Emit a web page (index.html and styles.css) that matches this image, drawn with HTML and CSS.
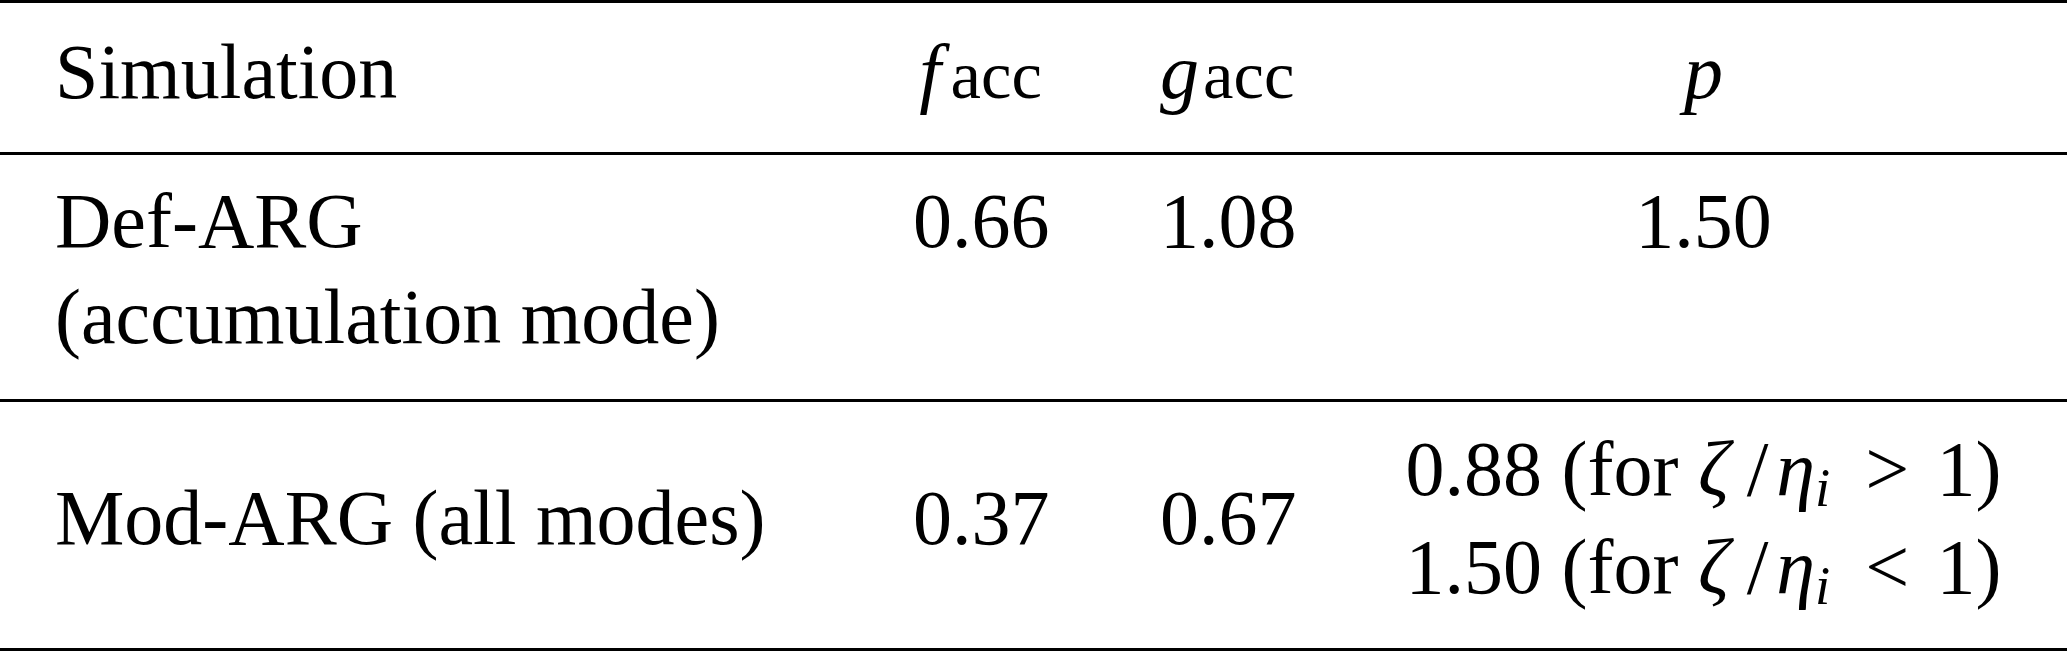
FILE: index.html
```html
<!DOCTYPE html>
<html>

<head>
    <title>Accretion parameters</title>
    <link rel="stylesheet" href="styles.css">
</head>

<body>
    <table class="params">
        <colgroup>
            <col class="col-name">
            <col class="col-f">
            <col class="col-g">
            <col class="col-p">
        </colgroup>
        <thead>
            <tr>
                <th class="name">Simulation</th>
                <th><i class="sym-f">f</i><span class="sub sub-f">acc</span></th>
                <th><i>g</i><span class="sub">acc</span></th>
                <th class="center"><i>p</i></th>
            </tr>
        </thead>
        <tbody>
            <tr class="row-def">
                <td class="name">Def-ARG<br>(accumulation mode)</td>
                <td>0.66</td>
                <td>1.08</td>
                <td class="center">1.50</td>
            </tr>
            <tr class="row-mod">
                <td class="name">Mod-ARG (all modes)</td>
                <td>0.37</td>
                <td>0.67</td>
                <td class="center multi">
                    0.88 (for <i class="greek">ζ</i><span class="slash">/</span><i>η</i><sub class="idx">i</sub><span class="rel">&gt;</span>1)<br>
                    1.50 (for <i class="greek">ζ</i><span class="slash">/</span><i>η</i><sub class="idx">i</sub><span class="rel">&lt;</span>1)
                </td>
            </tr>
        </tbody>
    </table>
</body>

</html>
```

FILE: styles.css
```css
body {
    margin: 0;
    padding: 0;
    background: #fff;
    color: #000;
    font-family: "Liberation Serif", "Times New Roman", serif;
}

.params {
    width: 2067px;
    table-layout: fixed;
    border-collapse: separate;
    border-spacing: 0;
    font-size: 78px;
    line-height: 96px;
}

.col-name {
    width: 856px;
}

.col-f {
    width: 247px;
}

.col-g {
    width: 237px;
}

.col-p {
    width: 727px;
}

.params th,
.params td {
    padding: 18px 57px 34px 57px;
    text-align: left;
    font-weight: normal;
    vertical-align: top;
    white-space: nowrap;
    border-bottom: 3px solid #000;
}

.params th {
    border-top: 3px solid #000;
    padding-top: 21px;
    padding-bottom: 32px;
}

.params .name {
    padding-left: 55px;
}

.params .center {
    text-align: center;
}

.sub {
    font-size: 0.88em;
    line-height: 0;
    margin-left: 0.06em;
}

/* italic f needs a little correction before the subscript */
.sym-f {
    margin-left: 0.08em;
}

.sub-f {
    margin-left: 0.14em;
}

.row-mod td {
    vertical-align: middle;
    padding-bottom: 32px;
}

.multi {
    line-height: 98px;
}

.greek {
    margin-right: 0.22em;
}

.slash {
    margin-right: 0.1em;
}

.idx {
    font-size: 0.7em;
    font-style: italic;
    vertical-align: -0.2em;
    line-height: 0;
}

.rel {
    margin: 0 0.35em 0 0.45em;
}
```
